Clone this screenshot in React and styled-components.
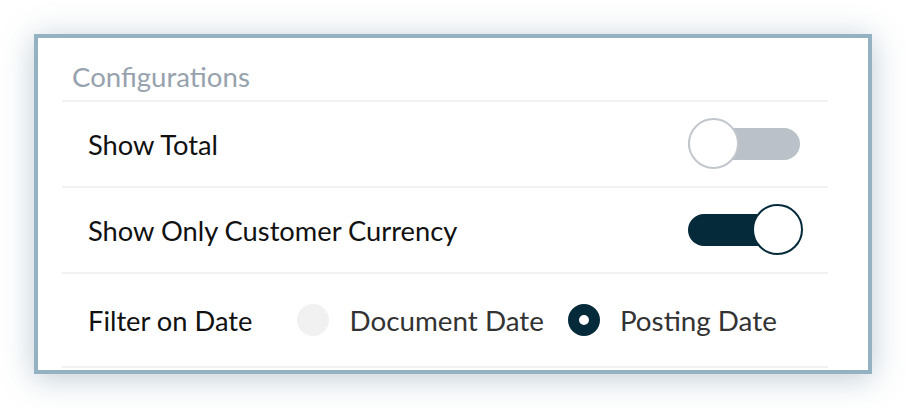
import React from 'react';
import styled, { createGlobalStyle } from 'styled-components';

const GlobalStyle = createGlobalStyle`
	body {
		margin: 0;
		background: #ffffff;
		font-family: Lato, 'Noto Sans', sans-serif;
	}
`;

const Page = styled.div`
	padding: 34px;
`;

const Panel = styled.section`
	width: 838px;
	height: 340px;
	box-sizing: border-box;
	border: 4px solid #94b2c2;
	background: #ffffff;
	box-shadow: 0 4px 30px rgba(70, 110, 135, 0.35);
	padding: 0 40px 0 24px;
	display: flex;
	flex-direction: column;
`;

const Title = styled.h2`
	margin: 0;
	height: 64px;
	box-sizing: border-box;
	padding: 22px 0 0 10px;
	font-size: 27.6px;
	font-weight: 400;
	line-height: 34px;
	color: #97a2ae;
	border-bottom: 2px solid #f1f1f1;
`;

const Row = styled.div`
	display: flex;
	align-items: center;
	justify-content: space-between;
	height: ${({ tall }) => (tall ? '94px' : '86px')};
	box-sizing: border-box;
	padding: 0 28px 0 26px;
	border-bottom: 2px solid #f1f1f1;
`;

const Label = styled.span`
	font-size: 27.3px;
	color: #111111;
	white-space: nowrap;
`;

const Track = styled.div`
	position: relative;
	width: 112px;
	height: 32px;
	border-radius: 16px;
	background: ${({ on }) => (on ? '#052a3a' : '#bac1c9')};
`;

const Knob = styled.div`
	position: absolute;
	top: -10px;
	${({ on }) => (on ? 'right: -3px;' : 'left: 0;')}
	width: 51px;
	height: 51px;
	box-sizing: border-box;
	border-radius: 50%;
	background: #ffffff;
	border: 2px solid ${({ on }) => (on ? '#052a3a' : '#c2c7cd')};
`;

const Toggle = ({ on }) => (
	<Track on={on ? 1 : 0}>
		<Knob on={on ? 1 : 0} />
	</Track>
);

const RadioGroup = styled.div`
	display: flex;
	align-items: center;
	flex: 1;
	margin-left: 45px;
`;

const RadioOption = styled.label`
	display: flex;
	align-items: center;
	gap: 20px;
	margin-right: 24px;
	font-size: 27.8px;
	color: #333333;
	white-space: nowrap;
	flex-shrink: 0;
`;

const Dot = styled.span`
	flex-shrink: 0;
	width: 32px;
	height: 32px;
	box-sizing: border-box;
	border-radius: 50%;
	background: ${({ checked }) => (checked ? '#ffffff' : '#f1f1f1')};
	border: ${({ checked }) => (checked ? '11px solid #052a3a' : 'none')};
`;

const FilterRow = styled(Row)`
	justify-content: flex-start;
`;

const App = () => {
	return (
		<Page>
			<GlobalStyle />
			<Panel>
				<Title>Configurations</Title>
				<Row>
					<Label>Show Total</Label>
					<Toggle />
				</Row>
				<Row>
					<Label>Show Only Customer Currency</Label>
					<Toggle on />
				</Row>
				<FilterRow tall>
					<Label>Filter on Date</Label>
					<RadioGroup>
						<RadioOption>
							<Dot />
							Document Date
						</RadioOption>
						<RadioOption>
							<Dot checked={1} />
							Posting Date
						</RadioOption>
					</RadioGroup>
				</FilterRow>
			</Panel>
		</Page>
	);
};

export default App;
